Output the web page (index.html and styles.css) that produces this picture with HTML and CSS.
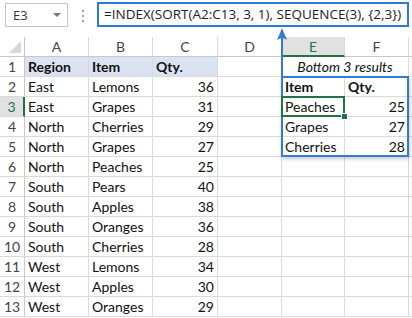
FILE: index.html
```html
<!DOCTYPE html>
<html>
<head>
<meta charset="utf-8">
<title>Bottom 3 results</title>
<link rel="stylesheet" href="styles.css">
</head>
<body>
<div class="toolbar">
    <div class="namebox"><span>E3</span><span class="caret"></span></div>
    <div class="dots"><i></i><i></i><i></i></div>
    <div class="formula">=INDEX(SORT(A2:C13, 3, 1), SEQUENCE(3), {2,3})</div>
</div>

<div class="sheet">
    <div class="corner"><span class="tri"></span></div>
    <div class="ch">A</div><div class="ch">B</div><div class="ch">C</div><div class="ch">D</div>
    <div class="ch sel">E</div><div class="ch">F</div><div class="ch"></div>

    <div class="rh">1</div>
    <div class="c hd">Region</div><div class="c hd">Item</div><div class="c hd">Qty.</div><div class="c"></div>
    <div class="c cap">Bottom 3 results</div><div class="c"></div>

    <div class="rh">2</div>
    <div class="c">East</div><div class="c">Lemons</div><div class="c n">36</div><div class="c"></div>
    <div class="c b">Item</div><div class="c b">Qty.</div><div class="c"></div>

    <div class="rh sel">3</div>
    <div class="c">East</div><div class="c">Grapes</div><div class="c n">31</div><div class="c"></div>
    <div class="c active">Peaches</div><div class="c n">25</div><div class="c"></div>

    <div class="rh">4</div>
    <div class="c">North</div><div class="c">Cherries</div><div class="c n">29</div><div class="c"></div>
    <div class="c">Grapes</div><div class="c n">27</div><div class="c"></div>

    <div class="rh">5</div>
    <div class="c">North</div><div class="c">Grapes</div><div class="c n">27</div><div class="c"></div>
    <div class="c">Cherries</div><div class="c n">28</div><div class="c"></div>

    <div class="rh">6</div>
    <div class="c">North</div><div class="c">Peaches</div><div class="c n">25</div><div class="c"></div>
    <div class="c"></div><div class="c"></div><div class="c"></div>

    <div class="rh">7</div>
    <div class="c">South</div><div class="c">Pears</div><div class="c n">40</div><div class="c"></div>
    <div class="c"></div><div class="c"></div><div class="c"></div>

    <div class="rh">8</div>
    <div class="c">South</div><div class="c">Apples</div><div class="c n">38</div><div class="c"></div>
    <div class="c"></div><div class="c"></div><div class="c"></div>

    <div class="rh">9</div>
    <div class="c">South</div><div class="c">Oranges</div><div class="c n">36</div><div class="c"></div>
    <div class="c"></div><div class="c"></div><div class="c"></div>

    <div class="rh">10</div>
    <div class="c">South</div><div class="c">Cherries</div><div class="c n">28</div><div class="c"></div>
    <div class="c"></div><div class="c"></div><div class="c"></div>

    <div class="rh">11</div>
    <div class="c">West</div><div class="c">Lemons</div><div class="c n">34</div><div class="c"></div>
    <div class="c"></div><div class="c"></div><div class="c"></div>

    <div class="rh">12</div>
    <div class="c">West</div><div class="c">Apples</div><div class="c n">30</div><div class="c"></div>
    <div class="c"></div><div class="c"></div><div class="c"></div>

    <div class="rh">13</div>
    <div class="c">West</div><div class="c">Oranges</div><div class="c n">29</div><div class="c"></div>
    <div class="c"></div><div class="c"></div><div class="c"></div>
</div>

<!-- callout: frame round E2:F5 and arrow up to the formula -->
<div class="result-frame"></div>
<svg class="arrow" width="14" height="52" viewBox="0 0 14 52">
    <path d="M7 2 L12 14 L7 11.5 L2 14 Z" fill="#2f7bd8"/>
    <rect x="6" y="10" width="2" height="42" fill="#2f7bd8"/>
</svg>
</body>
</html>
```

FILE: styles.css
```css
body {
    margin: 0;
    background: #fff;
    font-family: Lato, "Liberation Sans", sans-serif;
    font-size: 14px;
    color: #111;
}
.toolbar {
    height: 37px;
    display: flex;
    align-items: flex-start;
    padding-top: 3px;
    box-sizing: border-box;
}
.namebox {
    margin-left: 5px;
    width: 63px;
    height: 24px;
    box-sizing: border-box;
    border: 1px solid #c6c6c6;
    display: flex;
    align-items: center;
    justify-content: space-between;
    padding: 0 6px 0 7px;
    font-family: "Open Sans", sans-serif;
    font-size: 13px;
    color: #333;
}
.caret {
    width: 0;
    height: 0;
    border-left: 4px solid transparent;
    border-right: 4px solid transparent;
    border-top: 4px solid #777;
}
.dots {
    width: 29px;
    display: flex;
    flex-direction: column;
    align-items: center;
    gap: 3px;
    padding-top: 7px;
}
.dots i {
    width: 2px;
    height: 2px;
    background: #a0a0a0;
}
.formula {
    margin-top: -1px;
    width: 312px;
    height: 25px;
    box-sizing: border-box;
    border: 2px solid #2a7ad8;
    padding-left: 5px;
    font-family: "Open Sans", sans-serif;
    font-size: 13.5px;
    line-height: 21px;
    color: #222;
    white-space: nowrap;
}

.sheet {
    display: grid;
    grid-template-columns: 25px 64px 64px 65px 64px 63px 64px 1fr;
    grid-auto-rows: 20px;
}
.sheet > div {
    box-sizing: border-box;
    border-right: 1px solid #dadada;
    border-bottom: 1px solid #dadada;
    white-space: nowrap;
    overflow: hidden;
    line-height: 20px;
}
.corner {
    position: relative;
    border-right-color: #c8c8c8 !important;
    border-bottom-color: #c8c8c8 !important;
}
.tri {
    position: absolute;
    right: 3px;
    bottom: 3px;
    width: 0;
    height: 0;
    border-left: 12px solid transparent;
    border-bottom: 12px solid #d6d6d6;
}
.ch {
    text-align: center;
    color: #444;
    border-bottom-color: #c8c8c8 !important;
}
.rh {
    text-align: center;
    color: #444;
    border-right-color: #c8c8c8 !important;
}
.ch.sel {
    background: #e1e1e1;
    color: #217346;
    border-bottom: 2px solid #217346 !important;
}
.rh.sel {
    background: #e1e1e1;
    color: #217346;
    border-right: 2px solid #217346 !important;
}
.c {
    padding: 0 3px;
}
.n {
    text-align: right;
}
.hd {
    background: #dbe3f3;
    font-weight: bold;
}
.b {
    font-weight: bold;
}
.cap {
    grid-column: span 2;
    text-align: center;
    font-style: italic;
}
.active {
    position: relative;
    overflow: visible !important;
}
.active::after {
    content: "";
    position: absolute;
    left: -1px;
    top: -1px;
    right: -1px;
    bottom: -1px;
    border: 2px solid #217346;
    z-index: 2;
}
.active::before {
    content: "";
    position: absolute;
    right: -4px;
    bottom: -4px;
    width: 5px;
    height: 5px;
    background: #217346;
    border: 1px solid #fff;
    z-index: 3;
}

.result-frame {
    position: absolute;
    left: 281px;
    top: 76px;
    width: 128px;
    height: 81px;
    box-sizing: border-box;
    border: 2px solid #2f7bd8;
    box-shadow: 1px 2px 4px rgba(0, 0, 0, .22);
    pointer-events: none;
}
.arrow {
    position: absolute;
    left: 275px;
    top: 26px;
}
```
